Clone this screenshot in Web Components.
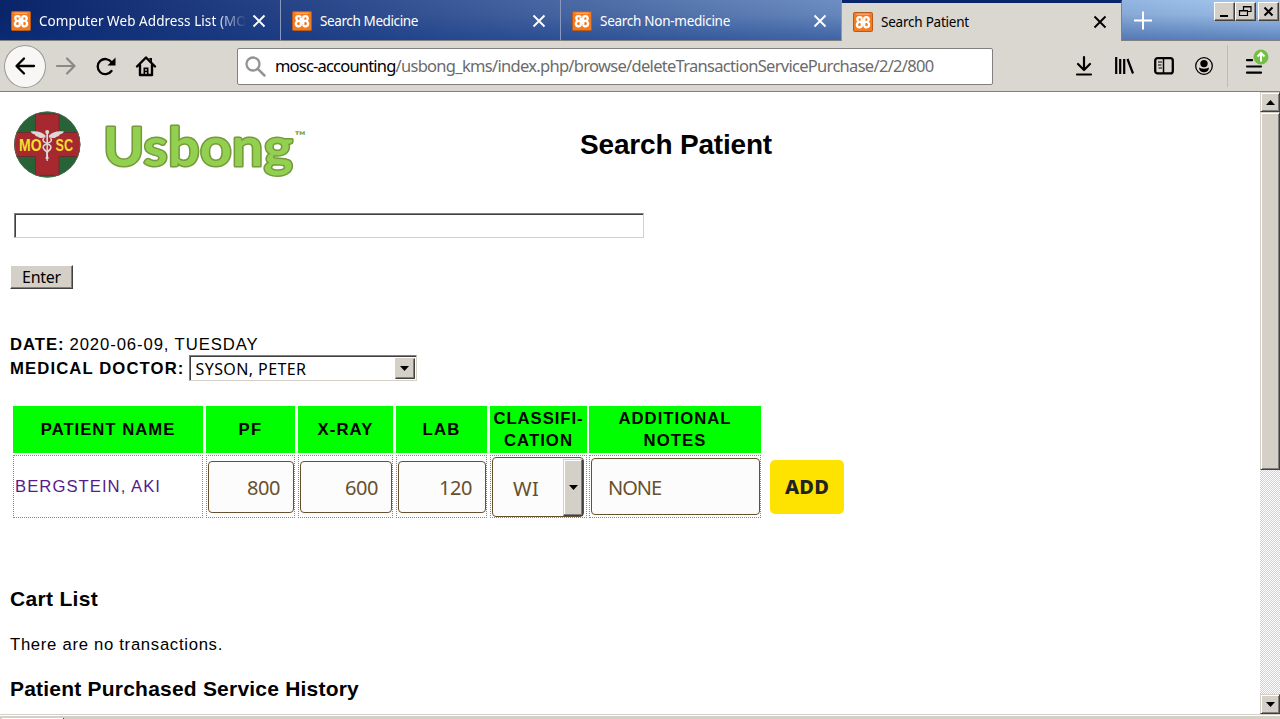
<!DOCTYPE html>
<html lang="en">
<head>
<meta charset="utf-8">
<title>Search Patient</title>
<style>
html,body{margin:0;height:100%;overflow:hidden;background:#fff}
</style>
</head>
<body>
<browser-window></browser-window>
<script>
const UI = '"Noto Sans","DejaVu Sans Condensed",sans-serif';
function define(name, html, setup) {
  const tpl = document.createElement('template');
  tpl.innerHTML = html;
  customElements.define(name, class extends HTMLElement {
    connectedCallback() {
      if (this.shadowRoot) return;
      this.attachShadow({mode: 'open'}).appendChild(tpl.content.cloneNode(true));
      if (setup) setup.call(this, this.shadowRoot);
    }
  });
}

/* A run of text tracked to occupy the width in its w attribute */
define('fit-text', `<style>:host{display:inline-block;white-space:pre}</style><span><slot></slot></span>`, function (r) {
  const w = +this.getAttribute('w'), span = r.querySelector('span');
  const natural = span.getBoundingClientRect().width;
  if (w && natural) span.style.letterSpacing = ((w - natural) / this.textContent.length) + 'px';
});

define('fav-icon', `<style>:host{display:block;width:20px;height:20px;flex:none}svg{display:block}</style>
<svg width="20" height="20" viewBox="0 0 20 20"><rect x=".5" y=".5" width="19" height="19" rx="1" fill="#f47a20" stroke="#b85a1a"/>
<path d="M3.5 2.2h13" stroke="#fbb98a" stroke-width="1"/>
<path d="M8.8 6.2C8.600 5 4.300 4.300 4.300 7.200C4.300 8.800 5.200 9.300 6.200 10C4.600 10.500 3.700 11.500 3.900 13.200C4.200 16.200 8.800 15.700 8.800 13.200V6.600M11.200 13.600C11.400 16 16.100 15.900 16.100 12.800C16.100 11 15 10.300 13.800 10C15.200 9.300 15.900 8.500 15.700 7C15.300 4.300 11.200 4.600 11.200 7V13.500M7 10H13" fill="none" stroke="#fff" stroke-width="2.300" stroke-linejoin="round"/></svg>`);

define('browser-tab', `<style>
:host{box-sizing:border-box;display:flex;align-items:center;width:var(--w,280px);height:41px;padding:2px 13px 0 11px;color:#fff;border-right:1px solid #8b98bd;border-bottom:1px solid #808080;font:14px/20px ${UI}}
:host([active]){background:#dad7d0;color:#000;border-right:1px solid #808080;border-bottom:0;border-top:3px solid #0a246a;padding-top:0;padding-bottom:1px}
.t{margin-left:8px;flex:1;white-space:nowrap;overflow:hidden;font-size:13.500px}
:host([fade]) .t{-webkit-mask-image:linear-gradient(90deg,#000 176px,transparent 208px);mask-image:linear-gradient(90deg,#000 176px,transparent 208px)}
svg{flex:none;margin-left:6px}
</style><fav-icon></fav-icon><div class="t"><slot></slot></div><svg width="16" height="16" viewBox="0 0 16 16"><path d="M2.500 2.500l11 11M13.500 2.500l-11 11" stroke="currentColor" stroke-width="1.900"/></svg>`);

define('caption-button', `<style>:host{box-sizing:border-box;display:block;width:21px;height:19px;background:#d4d0c8;border:1px solid;border-color:#fff #404040 #404040 #fff;box-shadow:inset -1px -1px #808080}svg{display:block}</style><slot></slot>`);

define('tab-strip', `<style>
:host{display:flex;height:41px;box-sizing:border-box;background:linear-gradient(180deg,rgba(10,36,106,0) 0%,rgba(10,36,106,.08) 35%,rgba(10,50,130,.48) 100%),linear-gradient(90deg,#0a246a 0%,#2b488b 25%,#5373ac 50%,#7d9fd0 75%,#a6caf0 100%)}
.rest{flex:1;display:flex;border-bottom:1px solid #808080;padding-left:11px}
.plus{margin-top:11px}.win{display:flex;margin-left:auto;margin-top:2px;padding-right:1px}
</style>
<browser-tab fade style="--w:281px"><fit-text w="224">Computer Web Address List (MOSC</fit-text></browser-tab>
<browser-tab style="--w:280px"><fit-text w="98">Search Medicine</fit-text></browser-tab>
<browser-tab style="--w:281px"><fit-text w="130">Search Non-medicine</fit-text></browser-tab>
<browser-tab active style="--w:280px"><fit-text w="88">Search Patient</fit-text></browser-tab>
<div class="rest"><svg class="plus" width="20" height="20"><path d="M10 .5v18M1 9.500h18" stroke="#fff" stroke-width="2"/></svg>
<div class="win"><caption-button><svg width="19" height="17"><path d="M5 13h8" stroke="#000" stroke-width="2"/></svg></caption-button><caption-button><svg width="19" height="17"><path d="M7.500 7V3.500h7.500v5h-3M7 4h8M3.500 7.500h8v5h-8zM3 8h9" fill="none" stroke="#000" stroke-width="1.200"/></svg></caption-button><caption-button style="margin-left:2px"><svg width="19" height="17"><path d="M5.500 4.500l8 8M13.500 4.500l-8 8" stroke="#000" stroke-width="2"/></svg></caption-button></div></div>`);

define('nav-bar', `<style>
:host{display:flex;align-items:center;box-sizing:border-box;height:51px;background:#dad7d0;border-bottom:1px solid #808080;padding:0 11px 0 4px}
svg{display:block;flex:none;overflow:visible}
.back{box-sizing:border-box;width:42px;height:43px;border:1px solid #999;border-radius:50%;background:#f8f7f5;display:grid;place-items:center}
.url{box-sizing:border-box;display:flex;align-items:center;width:756px;height:37px;margin-left:81px;border:1px solid #808080;border-radius:2px;background:#fff;padding-left:7px;font:16.500px/24px ${UI};color:#6b6b6b}
.url b{font-weight:400;color:#000}.url .tx{margin-left:9px;display:flex}
.sep{width:1px;height:42px;background:#bfbcb5;margin-left:14px}
.menu{position:relative;margin-left:18px}
.menu .up{position:absolute;left:7px;top:-9px}
</style>
<div class="back"><svg width="20" height="18" viewBox="0 0 20 18"><path d="M19 9H2M9 1.500L1.500 9 9 16.500" fill="none" stroke="#000" stroke-width="2.300" stroke-linecap="round" stroke-linejoin="round"/></svg></div>
<svg style="margin-left:10px" width="20" height="18" viewBox="0 0 20 18"><path d="M1 9h17M11 1.500L18.500 9 11 16.500" fill="none" stroke="#8b8984" stroke-width="2.200" stroke-linecap="round" stroke-linejoin="round"/></svg>
<svg style="margin-left:20px" width="20" height="19" viewBox="0 0 20 19"><path d="M15.500 14A7.600 7.600 0 1 1 15.500 5.200" fill="none" stroke="#000" stroke-width="2.300" stroke-linecap="round"/><path d="M19.500.5V8.500H11.500z" fill="#000"/></svg>
<svg style="margin-left:20px" width="20" height="20" viewBox="0 0 20 20"><path d="M1 10.500L10 1.500l9 9M4 9v10h12V9" fill="none" stroke="#000" stroke-width="2.400" stroke-linecap="round" stroke-linejoin="round"/><path d="M7.500 19v-7.500h5V19zM13 2h3v5" fill="#000"/><path d="M9.300 13h1.400v1.800H9.300zM9.300 16h1.400v2H9.300z" fill="#dad7d0"/></svg>
<div class="url"><svg width="21" height="21" viewBox="0 0 21 21"><circle cx="8" cy="8" r="6.500" fill="none" stroke="#949494" stroke-width="2.300"/><path d="M12.800 12.800l6.700 6.700" stroke="#949494" stroke-width="2.500" stroke-linecap="round"/></svg><div class="tx"><b><fit-text w="120.500">mosc-accounting</fit-text></b><fit-text w="538">/usbong_kms/index.php/browse/deleteTransactionServicePurchase/2/2/800</fit-text></div></div>
<svg style="margin-left:83px" width="16" height="20" viewBox="0 0 16 20"><path d="M8 1v12M2 8l6 6 6-6M1 18.500h14" fill="none" stroke="#000" stroke-width="2.200" stroke-linecap="round" stroke-linejoin="round"/></svg>
<svg style="margin-left:23px" width="20" height="18" viewBox="0 0 20 18"><path d="M1.200 0v17M5.200 2v15M9.200 2v15M12.500 2l5.500 14.500" stroke="#000" stroke-width="2.200"/></svg>
<svg style="margin-left:19px" width="20" height="18" viewBox="0 0 20 18"><rect x="1.200" y="1.200" width="17.600" height="15.200" rx="2.500" fill="none" stroke="#000" stroke-width="2.300"/><path d="M9.500 1v15.500" stroke="#000" stroke-width="1.500"/><path d="M4 5h4M4 8h3.500M4.500 11H8" stroke="#000" stroke-width="1.200"/></svg>
<svg style="margin-left:21px" width="18" height="18" viewBox="0 0 18 18"><circle cx="9" cy="9" r="8.300" fill="none" stroke="#000" stroke-width="1.300"/><circle cx="9" cy="6.600" r="3.700" fill="#000"/><path d="M4 10.500q5 2.500 10 0c0 3-2 4.700-5 4.700s-5-1.700-5-4.700z" fill="#000"/></svg>
<div class="sep"></div>
<div class="menu"><svg width="16" height="17" viewBox="0 0 16 17"><path d="M1 2.200h5M1 8.500h14M1 14.700h14" stroke="#000" stroke-width="2.200" stroke-linecap="round"/></svg><svg class="up" width="16" height="16" viewBox="0 0 16 16"><circle cx="8" cy="8" r="7.500" fill="#74bf43"/><path d="M8 12.500V4.500M4.500 7.500L8 4l3.500 3.500" fill="none" stroke="#fff" stroke-width="2"/></svg></div>`);

define('mosc-logo', `<style>:host{display:block;width:67px;height:67px}svg{display:block}</style>
<svg width="67" height="67" viewBox="0 0 67 67"><defs><clipPath id="c"><circle cx="33.300" cy="33.500" r="33"/></clipPath></defs>
<g clip-path="url(#c)"><rect width="67" height="67" fill="#276337"/><path d="M21.500 3H45v18.500h22v24H45v18.800H21.500V45.500H0v-24h21.500z" fill="#a6292f" stroke="#6d2629" stroke-width=".8"/></g>
<circle cx="33.300" cy="33.500" r="32.600" fill="none" stroke="#4d6b55" stroke-width=".8"/>
<g fill="#ddd7d8"><circle cx="33.200" cy="21" r="2"/><path d="M32.300 22h1.800l-.3 28h-1.200z"/><path d="M31.500 24.500C27 20 22 19.800 16.500 20.500c1 2 2.600 2.600 4 2.800.7 1.500 2 2.300 3.500 2.400.8 1.300 3.600 1.600 7.500.8zM35 24.500c4.500-4.500 9.500-4.700 15-4-1 2-2.600 2.600-4 2.800-.7 1.500-2 2.300-3.500 2.400-.8 1.300-3.600 1.600-7.500.8z"/></g>
<path d="M30 27q-3 3 3 5.500t3 6q-3 2-3 4t1 5.500M36.500 27q3 3-3.300 5.500t-3 6q3 2 3 4t-1 5.500" fill="none" stroke="#ddd7d8" stroke-width="1.600"/>
<g font-family="Liberation Sans,Arial,sans-serif" font-weight="700" font-size="16" fill="#f6df2c"><text x="5" y="39.500" textLength="22.500" lengthAdjust="spacingAndGlyphs">MO</text><text x="41.500" y="39.500" textLength="17.500" lengthAdjust="spacingAndGlyphs">SC</text></g></svg>`);

define('usbong-logo', `<style>:host{display:block}svg{display:block;overflow:visible}text{font-family:Lato,sans-serif;font-weight:700}</style>
<svg width="204" height="67" viewBox="0 0 204 67"><text x="-2" y="55" font-size="54" textLength="190" lengthAdjust="spacingAndGlyphs" fill="#92d050" stroke="#76993b" stroke-width="3" stroke-linejoin="round" paint-order="stroke">Usbong</text><text x="190" y="29" font-size="12" textLength="11" lengthAdjust="spacingAndGlyphs" fill="#76a040">™</text></svg>`);

define('classic-select', `<style>
:host{box-sizing:border-box;display:flex;width:228px;height:26px;border:1px solid;border-color:#808080 #d4d0c8 #d4d0c8 #808080;box-shadow:inset 1px 1px #404040;padding:2px 1px 1px 6px;background:#fff;font:16px/22px ${UI}}
.b{box-sizing:border-box;width:20px;margin-left:auto;background:#d4d0c8;border:1px solid;border-color:#d4d0c8 #404040 #404040 #d4d0c8;box-shadow:inset -1px -1px #808080;display:grid;place-items:center}
:host([tall]){width:92px;height:60px;border:1px solid #66502e;border-radius:4px;box-shadow:none;background:#fcfcfc;color:#66502e;padding:1px 0 0 20px;font:20px/60px ${UI}}
:host([tall]) .b{box-shadow:inset -1px -1px #808080,inset 1px 1px #fff}
</style><slot></slot><div class="b"><svg width="9" height="5"><path d="M0 0h9L4.500 5z"/></svg></div>`);

define('money-field', `<style>:host{box-sizing:border-box;display:flex;align-items:center;justify-content:flex-end;width:var(--w);height:var(--h,52px);padding:2px 13px 0 16px;border:1px solid #66502e;border-radius:4px;background:#fcfcfc;color:#66502e;font:20px/28px ${UI}}:host([left]){justify-content:flex-start}</style><slot></slot>`);

define('service-table', `<style>
:host{display:grid;grid-template-columns:190px 89px 95px 91px 97px 171px 74px;grid-template-rows:47px 63px;gap:2px 3px;margin-left:3px;font:16.700px/22px "Liberation Sans",Arial,sans-serif}
.h{background:#0f0;font-weight:700;display:flex;flex-direction:column;align-items:center;justify-content:center}
.c{box-sizing:border-box;border:1px dotted #9c8465;display:flex;align-items:center;padding-left:1px}
.n{margin-left:-1px}.e{visibility:hidden}
a{color:#551a8b;text-decoration:underline;text-underline-offset:2px}
.add{align-self:start;display:grid;place-items:center;height:54px;margin:5px 0 0 6px;width:74px;border-radius:5px;background:#ffe300;color:#222;font:800 20px/28px ${UI}}
</style>
<div class="h"><fit-text w="134.500">PATIENT NAME</fit-text></div><div class="h"><fit-text w="24">PF</fit-text></div><div class="h"><fit-text w="56">X-RAY</fit-text></div><div class="h"><fit-text w="38">LAB</fit-text></div><div class="h"><fit-text w="90">CLASSIFI-</fit-text><fit-text w="69">CATION</fit-text></div><div class="h n"><fit-text w="113">ADDITIONAL</fit-text><fit-text w="63">NOTES</fit-text></div><div class="e"></div>
<div class="c"><a><fit-text w="146">BERGSTEIN, AKI</fit-text></a></div>
<div class="c"><money-field style="--w:87px"><fit-text w="33">800</fit-text></money-field></div>
<div class="c"><money-field style="--w:92px"><fit-text w="33">600</fit-text></money-field></div>
<div class="c"><money-field style="--w:89px"><fit-text w="33">120</fit-text></money-field></div>
<div class="c"><classic-select tall><fit-text w="26">WI</fit-text></classic-select></div>
<div class="c n"><money-field left style="--w:171px;--h:57px"><fit-text w="53">NONE</fit-text></money-field></div>
<div class="add"><fit-text w="44">ADD</fit-text></div>`);

define('patient-page', `<style>
:host{flex:1;min-width:0;display:flex;flex-direction:column;align-items:flex-start;overflow:hidden;box-sizing:border-box;padding:19px 0 0 10px;background:#fff;color:#000;font:16.700px/24px "Liberation Sans",Arial,sans-serif}
.brand{display:flex;height:67px;margin-left:4px}
usbong-logo{margin-left:24px}
h1{font-size:28px;line-height:34px;margin:17px 0 0 271px}
.q{box-sizing:border-box;margin:35px 0 0 4px;width:630px;height:25px;border:1px solid;border-color:#808080 #d4d0c8 #d4d0c8 #808080;box-shadow:inset 1px 1px #404040}
.enter{box-sizing:border-box;margin-top:27px;width:63px;height:24px;background:#d4d0c8;border:1px solid;border-color:#fff #404040 #404040 #fff;box-shadow:inset -1px -1px #808080;display:grid;place-items:center;font:16px/22px ${UI}}
.d{margin-top:44px;height:22px;line-height:23px;display:flex}.d fit-text+fit-text{margin-left:5px}
.m{display:flex;height:26px;line-height:27px;margin-bottom:25px}.m classic-select{margin-left:4px}
b fit-text{font-weight:700}
h3{font-size:21px;line-height:24px;height:24px;margin:69px 0 0}
p{margin:21px 0 0;height:24px;line-height:25px}
h3.s{margin-top:21px}
</style>
<div class="brand"><mosc-logo></mosc-logo><usbong-logo></usbong-logo><h1><fit-text w="192">Search Patient</fit-text></h1></div>
<div class="q"></div><div class="enter"><fit-text w="39">Enter</fit-text></div>
<div class="d"><fit-text w="54.500" style="font-weight:700">DATE:</fit-text><fit-text w="189">2020-06-09, TUESDAY</fit-text></div>
<div class="m"><fit-text w="174.500" style="font-weight:700">MEDICAL DOCTOR:</fit-text><classic-select><fit-text w="111">SYSON, PETER</fit-text></classic-select></div>
<service-table></service-table>
<h3><fit-text w="88">Cart List</fit-text></h3>
<p><fit-text w="213">There are no transactions.</fit-text></p>
<h3 class="s"><fit-text w="349">Patient Purchased Service History</fit-text></h3>`);

define('scroll-bar', `<style>
:host{display:flex;flex-direction:column;width:20px;background:repeating-conic-gradient(#d4d0c8 0 25%,#fff 0 50%) 0 0/2px 2px}
div{box-sizing:border-box;background:#d4d0c8;border:1px solid;border-color:#d4d0c8 #404040 #404040 #d4d0c8;box-shadow:inset 1px 1px #fff,inset -1px -1px #808080;display:grid;place-items:center}
.a{height:20px}.t{height:358px}.z{margin-top:auto}
</style><div class="a"><svg width="9" height="5"><path d="M0 5h9L4.500 0z"/></svg></div><div class="t"></div><div class="a z"><svg width="9" height="5"><path d="M0 0h9L4.500 5z"/></svg></div>`);

define('status-edge', `<style>:host{box-sizing:border-box;display:block;height:5px;background:#d4d0c8;border-top:1px solid #d4d0c8;box-shadow:inset 0 1px #fff;padding:3px 0 0 2px}div{width:61px;height:1px;background:#fff;border-right:1px solid #404040}</style><div></div>`);

define('browser-window', `<style>:host{display:flex;flex-direction:column;width:1280px;height:719px;overflow:hidden}.v{flex:1;display:flex;min-height:0}</style>
<tab-strip></tab-strip><nav-bar></nav-bar><div class="v"><patient-page></patient-page><scroll-bar></scroll-bar></div><status-edge></status-edge>`);
</script>
</body>
</html>
